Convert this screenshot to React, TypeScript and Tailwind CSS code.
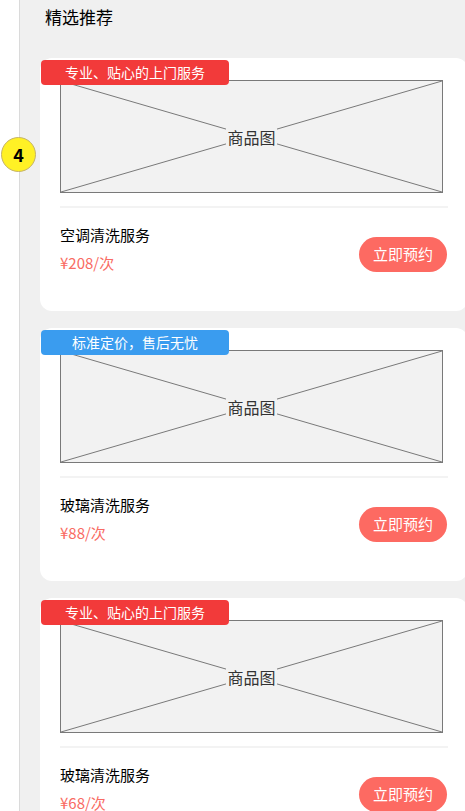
import React from 'react';

const font = { fontFamily: '"Noto Sans CJK SC", "Noto Sans", sans-serif' };

type Item = { tag: string; tagColor: string; name: string; price: string };

const items: Item[] = [
  { tag: '专业、贴心的上门服务', tagColor: 'bg-[#f23a3a]', name: '空调清洗服务', price: '¥208/次' },
  { tag: '标准定价，售后无忧', tagColor: 'bg-[#3a9cef]', name: '玻璃清洗服务', price: '¥88/次' },
  { tag: '专业、贴心的上门服务', tagColor: 'bg-[#f23a3a]', name: '玻璃清洗服务', price: '¥68/次' },
];

const Placeholder: React.FC = () => (
  <div className="relative h-[113px] w-[383px] border border-[#797979] bg-[#f2f2f2]">
    <svg className="absolute inset-0 h-full w-full" preserveAspectRatio="none" viewBox="0 0 100 100">
      <line x1="0" y1="0" x2="100" y2="100" stroke="#797979" strokeWidth="1" vectorEffect="non-scaling-stroke" />
      <line x1="100" y1="0" x2="0" y2="100" stroke="#797979" strokeWidth="1" vectorEffect="non-scaling-stroke" />
    </svg>
    <div className="absolute inset-0 flex items-center justify-center">
      <span className="bg-[#f2f2f2] px-[1px] text-[16px] leading-5 text-[#333]">商品图</span>
    </div>
  </div>
);

const Card: React.FC<{ item: Item }> = ({ item }) => (
  <div className="relative h-[253px] w-[428px] shrink-0 rounded-[12px] bg-white px-5 pt-[22px]">
    <div
      className={`absolute left-[1px] top-[2px] z-10 flex h-[25px] w-[188px] items-center justify-center rounded-[4px] text-[14px] text-white ${item.tagColor}`}
    >
      {item.tag}
    </div>
    <Placeholder />
    <div className="mt-[13px] h-[2px] w-[388px] bg-[#f3f3f3]" />
    <div className="mt-[13px] flex w-[388px] items-start justify-between">
      <div className="flex flex-col">
        <span className="text-[15px] leading-[28px] text-black">{item.name}</span>
        <span className="text-[15px] leading-[28px] text-[#f96b63]">{item.price}</span>
      </div>
      <button className="mr-[1px] mt-[16px] h-[35px] w-[88px] rounded-full bg-[#fd6a62] text-[15px] text-white">
        立即预约
      </button>
    </div>
  </div>
);

const App: React.FC = () => {
  return (
    <div className="relative flex h-[811px] w-[465px] overflow-hidden bg-white" style={font}>
      <div className="w-[20px] shrink-0 border-r border-[#dadada] bg-white" />
      <div className="flex flex-1 flex-col bg-[#f0f0f0] pl-5">
        <div className="pl-[5px] pt-[5px] text-[17px] leading-[24px] text-black">精选推荐</div>
        <div className="mt-[29px] flex flex-col gap-[17px]">
          {items.map((item, i) => (
            <Card key={i} item={item} />
          ))}
        </div>
      </div>
      {/* step marker */}
      <div className="absolute left-[1px] top-[137px] flex h-[35px] w-[35px] items-center justify-center rounded-full border border-[#c5b36a] bg-[#fff125] text-[18px] font-bold text-black">
        4
      </div>
    </div>
  );
};

export default App;
